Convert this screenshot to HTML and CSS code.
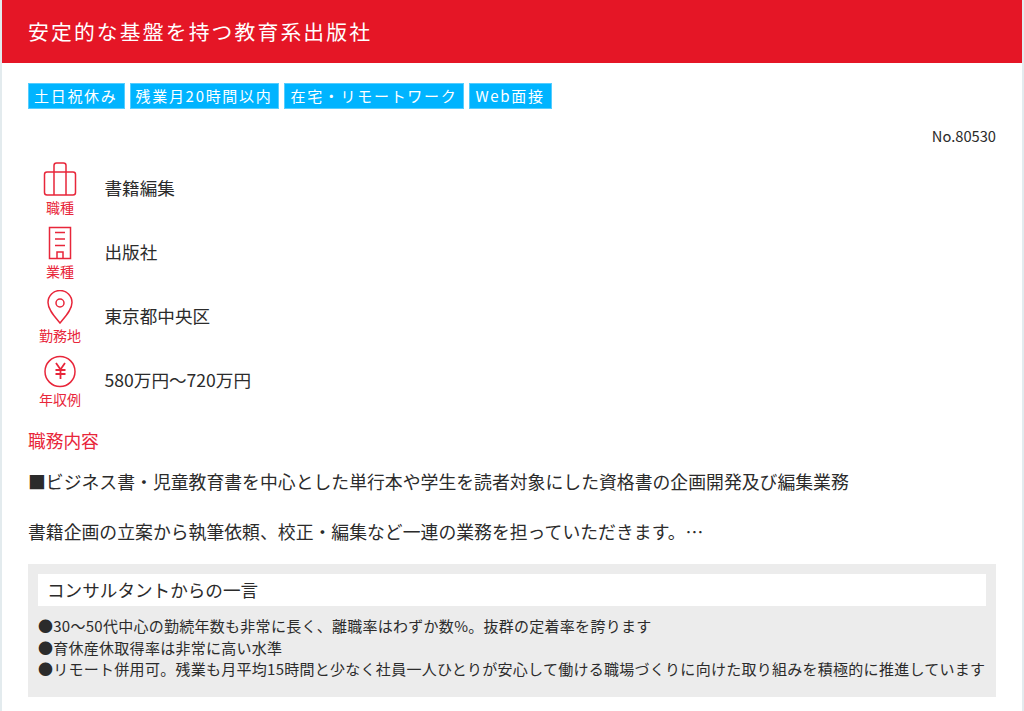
FILE: index.html
```html
<!DOCTYPE html>
<html lang="ja">
<head>
<meta charset="utf-8">
<title>求人</title>
<link rel="stylesheet" href="styles.css">
</head>
<body>
<main class="card">
  <h1 class="title">安定的な基盤を持つ教育系出版社</h1>
  <div class="content">
    <ul class="tags">
      <li class="tag">土日祝休み</li>
      <li class="tag">残業月20時間以内</li>
      <li class="tag">在宅・リモートワーク</li>
      <li class="tag">Web面接</li>
    </ul>
    <p class="number">No.80530</p>
    <dl class="specs">
      <div class="spec">
        <dt class="spec-label">
          <svg class="icon" width="34" height="34" viewBox="0 0 34 34" fill="none" stroke="#e8263a" stroke-width="1.5"><rect x="1.500" y="10" width="31" height="23" rx="2.500"/><path d="M11 33V3.500Q11 1 13.500 1H20.500Q23 1 23 3.500V33"/></svg>
          <span>職種</span>
        </dt>
        <dd class="spec-value">書籍編集</dd>
      </div>
      <div class="spec">
        <dt class="spec-label">
          <svg class="icon" width="34" height="34" viewBox="0 0 34 34" fill="none" stroke="#e8263a" stroke-width="1.5"><rect x="6.500" y="1.500" width="21" height="31"/><path d="M12 6.500H22M12 13H22M12 19.500H22M14 32.500V26H20V32.500"/></svg>
          <span>業種</span>
        </dt>
        <dd class="spec-value">出版社</dd>
      </div>
      <div class="spec">
        <dt class="spec-label">
          <svg class="icon" width="34" height="34" viewBox="0 0 34 34" fill="none" stroke="#e8263a" stroke-width="1.5"><path d="M17 33C12 27 5 20 5 12.500A12 12 0 0 1 29 12.500C29 20 22 27 17 33Z"/><circle cx="17" cy="13" r="4"/></svg>
          <span>勤務地</span>
        </dt>
        <dd class="spec-value">東京都中央区</dd>
      </div>
      <div class="spec">
        <dt class="spec-label">
          <svg class="icon" width="34" height="34" viewBox="0 0 34 34" fill="none" stroke="#e8263a" stroke-width="1.5"><circle cx="17" cy="17.500" r="15"/><path stroke-width="1.800" d="M13 9L17.500 15.500L22 9M17.500 15.500V25M12.500 16H22.500M12.500 20H22.500"/></svg>
          <span>年収例</span>
        </dt>
        <dd class="spec-value">580万円～720万円</dd>
      </div>
    </dl>
    <h2 class="section-title">職務内容</h2>
    <p class="lead">■ビジネス書・児童教育書を中心とした単行本や学生を読者対象にした資格書の企画開発及び編集業務</p>
    <p class="lead lead-second">書籍企画の立案から執筆依頼、校正・編集など一連の業務を担っていただきます。…</p>
    <section class="comment">
      <h3 class="comment-title">コンサルタントからの一言</h3>
      <p class="comment-body">●30～50代中心の勤続年数も非常に長く、離職率はわずか数%。抜群の定着率を誇ります<br>●育休産休取得率は非常に高い水準<br>●リモート併用可。残業も月平均15時間と少なく社員一人ひとりが安心して働ける職場づくりに向けた取り組みを積極的に推進しています</p>
    </section>
  </div>
</main>
</body>
</html>
```
FILE: styles.css
```css
* { box-sizing: border-box; margin: 0; padding: 0; }
html, body { height: 711px; overflow: hidden; }
body {
  background: #e3ebee;
  padding: 0 2px;
  font-family: "Noto Sans CJK JP", "Noto Sans", sans-serif;
  color: #2b2b2b;
}
.card { background: #fff; height: 711px; }
.title {
  background: #e51626;
  color: #fff;
  height: 63px;
  padding-left: 26px;
  font-size: 20.8px;
  font-weight: 400;
  line-height: 63px;
  letter-spacing: 2.150px;
}
.content { padding: 20px 26px 0; }
.tags { display: flex; gap: 5px; list-style: none; }
.tag {
  background: #00b4ff;
  color: #fff;
  height: 26px;
  padding: 0 6px 0 5px;
  font-size: 15px;
  line-height: 24px;
  letter-spacing: 1.700px;
  border: 1px solid #55cdff;
}
.number {
  margin-top: 15px;
  text-align: right;
  font-size: 14.700px;
  line-height: 24px;
}
.specs { margin-top: 9px; }
.spec { display: flex; align-items: center; height: 64px; }
.spec-label {
  width: 64px;
  margin-right: 12.500px;
  display: flex;
  flex-direction: column;
  align-items: center;
  gap: 2px;
  color: #e8263a;
  font-size: 14px;
  line-height: 18px;
}
.icon { display: block; }
.spec-value { font-size: 17.600px; padding-bottom: 3px; }
.section-title {
  margin-top: 15px;
  color: #e8263a;
  font-size: 17.700px;
  font-weight: 400;
  line-height: 24px;
}
.lead { margin-top: 17px; font-size: 17.850px; line-height: 24px; }
.lead-second { margin-top: 26px; }
.comment {
  margin-top: 21px;
  background: #ececec;
  padding: 10px 10px 16px;
  height: 133px;
}
.comment-title {
  background: #fff;
  height: 32px;
  padding-left: 9px;
  font-size: 17.600px;
  font-weight: 400;
  line-height: 32px;
}
.comment-body {
  margin-top: 9px;
  font-size: 15px;
  line-height: 21.500px;
  letter-spacing: 0.270px;
  white-space: nowrap;
}
```
